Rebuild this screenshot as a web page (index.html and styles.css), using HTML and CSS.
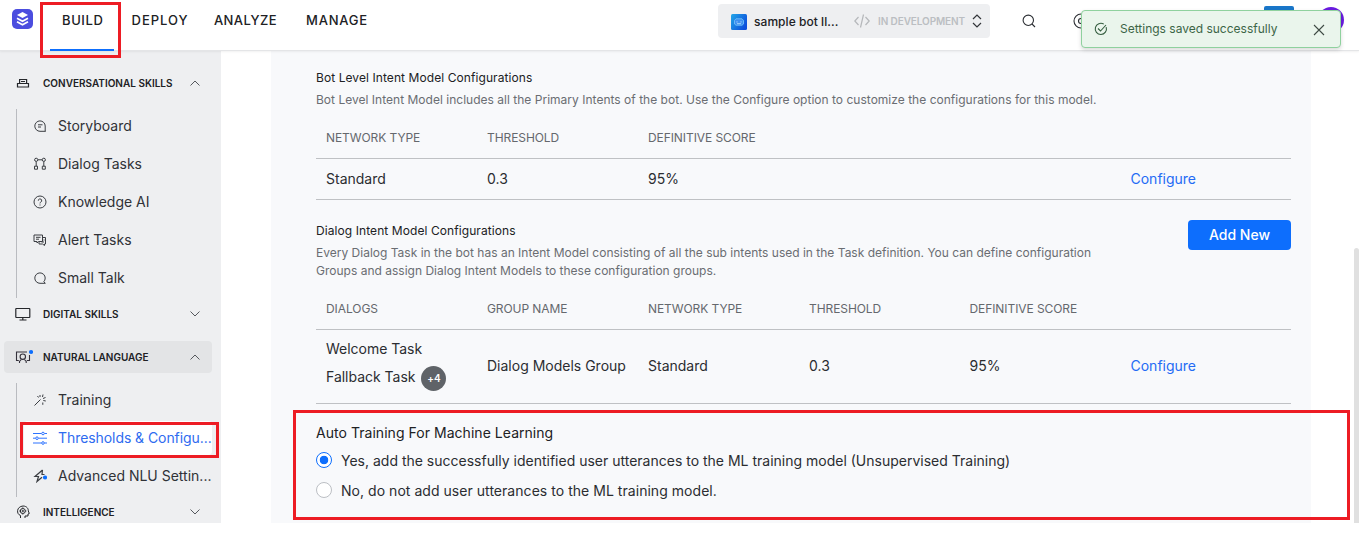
FILE: index.html
```html
<!DOCTYPE html>
<html lang="en">
<head>
<meta charset="utf-8">
<title>Thresholds &amp; Configurations</title>
<link rel="stylesheet" href="styles.css">
</head>
<body>
<div class="app">
  <header class="topbar">
    <svg class="logo" width="21" height="20" viewBox="0 0 21 20"><rect width="21" height="20" rx="5" fill="#4b4ddf"/><path d="M10.500 3l5.500 3-5.500 3L5 6z" fill="#fff"/><path d="M5 9.200l5.500 3 5.500-3M5 12.800l5.500 3 5.500-3" fill="none" stroke="#fff" stroke-width="1.700"/></svg>
    <nav class="tabs">
      <a class="tab active">BUILD</a><a class="tab deploy">DEPLOY</a><a class="tab analyze">ANALYZE</a><a class="tab manage">MANAGE</a>
    </nav>
    <div class="bot-picker">
      <svg class="bot-icon" width="16" height="16" viewBox="0 0 16 16"><defs><linearGradient id="botfill" x1="0" y1="0" x2="1" y2="0.600"><stop offset="0" stop-color="#24a8e8"/><stop offset="1" stop-color="#0c50dc"/></linearGradient></defs><rect width="16" height="16" rx="1.500" fill="url(#botfill)"/><path d="M5 4.800h6l1.500 1.700v3.500l-1.500 1.200H5L3.500 10v-3.500z" fill="#3d8ff0" stroke="#6fbdf8" stroke-width=".9"/><path d="M6 7.300v1.200M10 7.300v1.200M6 9.700h4" stroke="#b4dcff" stroke-width=".9"/></svg>
      <span class="bot-name">sample bot ll...</span>
      <svg class="code" width="16" height="14" viewBox="0 0 16 14" fill="none" stroke="#b5b7ba" stroke-width="1.200"><path d="M4.500 3L.8 7l3.700 4M11.500 3l3.700 4-3.700 4M9.500 .5L6.500 13.500"/></svg>
      <span class="bot-state">IN DEVELOPMENT</span>
      <svg class="updown" width="10" height="14" viewBox="0 0 10 14" fill="none" stroke="#33363a" stroke-width="1.200"><path d="M1 5l4-4 4 4M1 9l4 4 4-4"/></svg>
    </div>
    <svg class="search" width="14" height="14" viewBox="0 0 14 14" fill="none" stroke="#2b2e33" stroke-width="1.100"><circle cx="6.300" cy="6.300" r="5.200"/><path d="M10 10l3 3"/></svg>
    <svg class="help" width="16" height="16" viewBox="0 0 16 16" fill="none" stroke="#2b2e33" stroke-width="1.100"><circle cx="8" cy="8" r="7"/><circle cx="8" cy="8" r="2.500"/></svg>
    <span class="blue-tile"></span>
    <span class="avatar"></span>
  </header>

  <div class="body">
    <aside class="sidebar">
      <div class="section">
        <svg width="16" height="16" viewBox="0 0 16 16" fill="none" stroke="#25272b" stroke-width="1.200"><path d="M4.600 8V4.500h7V8M6 6.500h4M2.500 8.500h11V12h-11z"/></svg>
        <span>CONVERSATIONAL SKILLS</span>
        <svg class="chev" width="10" height="6" viewBox="0 0 10 6"><path d="M.5 5.500L5 1l4.500 4.500"/></svg>
      </div>
      <div class="group first">
        <a class="item"><svg width="14" height="14" viewBox="0 0 14 14"><path d="M12.500 12.300H7A5.200 5.200 0 1 1 12.200 7v5.300zM5 5.800h4.500M5 8h3"/></svg>Storyboard</a>
        <a class="item"><svg width="14" height="14" viewBox="0 0 14 14"><circle cx="3.200" cy="2.800" r="1.600"/><circle cx="10.800" cy="2.800" r="1.600"/><path d="M1.500 9.200h3v3h-3zM9.300 9.200h3v3h-3zM3.200 4.500v4.700M10.800 4.500v4.700M5 2.800h4"/></svg>Dialog Tasks</a>
        <a class="item"><svg width="14" height="14" viewBox="0 0 14 14"><circle cx="7" cy="7" r="6"/><path d="M5.300 5.700a1.700 1.700 0 1 1 2.500 1.400c-.6.400-.8.600-.8 1.300M7 9.500v1"/></svg>Knowledge AI</a>
        <a class="item"><svg width="14" height="14" viewBox="0 0 14 14"><path d="M1 2h8.500v6.500H5.500L4 10V8.500H1zM3 4.300h4.500M3 6.200h3M9.500 4.500h3V11h-1v1.500L9.500 11H6V9M10.500 7h1M8.500 9h2.500"/></svg>Alert Tasks</a>
        <a class="item"><svg width="14" height="14" viewBox="0 0 14 14"><path d="M7 12.300A5.200 5.200 0 1 1 12.200 7c0 1.600-.5 2.800-1.400 3.700l1.500 1.600z"/></svg>Small Talk</a>
      </div>
      <div class="section">
        <svg width="16" height="16" viewBox="0 0 16 16" fill="none" stroke="#25272b" stroke-width="1.200"><rect x=".8" y="2.500" width="14" height="9" rx=".5"/><path d="M7.800 11.500v2M4.500 14h7"/></svg>
        <span>DIGITAL SKILLS</span>
        <svg class="chev" width="10" height="6" viewBox="0 0 10 6"><path d="M.5.500L5 5 9.500.500"/></svg>
      </div>
      <div class="section open">
        <svg width="18" height="16" viewBox="0 0 18 16" fill="none" stroke="#34313b" stroke-width="1.100"><path d="M12 3H1.500v8.500h2.300M11.800 11.500h2.700V6"/><circle cx="7.800" cy="7.700" r="2.700"/><path d="M4.500 14v-1.500l1.800-2M11.200 14v-1.500l-1.800-2"/><circle cx="16" cy="3" r="2.100" fill="#0d6efd" stroke="none"/></svg>
        <span>NATURAL LANGUAGE</span>
        <svg class="chev" width="10" height="6" viewBox="0 0 10 6"><path d="M.5 5.500L5 1l4.500 4.500"/></svg>
      </div>
      <div class="group second">
        <a class="item"><svg width="14" height="14" viewBox="0 0 14 14"><path d="M1.500 12.500l6-6M7 2v2M10 1.500L9.500 4M12.500 4.500L10 5.500M12.800 8l-2.500-.5M9.800 9.500v2.300M4.500 3l1 1.500"/></svg>Training</a>
        <a class="item selected"><svg width="14" height="14" viewBox="0 0 14 14"><path d="M0 2.500h8.500M11.500 2.500H14M0 7.200h2.500M5.500 7.200H14M0 12h8.500M11.500 12H14"/><circle cx="10" cy="2.500" r="1.300"/><circle cx="4" cy="7.200" r="1.300"/><circle cx="10" cy="12" r="1.300"/></svg>Thresholds &amp; Configu...</a>
        <a class="item"><svg width="14" height="14" viewBox="0 0 14 14"><path d="M9.500 1L2 7.500h3.500L4 12.500l5-4.300M9.500 1l-.5 4.500h2.500" stroke-width="1.200"/><circle cx="12" cy="8.500" r="2.100" fill="#0d6efd" stroke="none"/></svg>Advanced NLU Settin...</a>
      </div>
      <div class="section last">
        <svg width="16" height="16" viewBox="0 0 16 16" fill="none" stroke="#25272b" stroke-width="1"><path d="M5.500 14v-2.500C1 10 1.500 2.500 8 2c4 0 5.500 3 5.300 5l1 2.500-1.300.5v2h-3v2"/><circle cx="7.800" cy="7" r="2.500"/><circle cx="7.800" cy="7" r=".7"/><path d="M7.800 3.500v1M7.800 9.500v1M4.300 7h1M10.300 7h1"/></svg>
        <span>INTELLIGENCE</span>
        <svg class="chev" width="10" height="6" viewBox="0 0 10 6"><path d="M.5.500L5 5 9.500.500"/></svg>
      </div>
    </aside>

    <main class="panel">
      <h3 class="title">Bot Level Intent Model Configurations</h3>
      <p class="desc one">Bot Level Intent Model includes all the Primary Intents of the bot. Use the Configure option to customize the configurations for this model.</p>
      <div class="row head"><span>NETWORK TYPE</span><span>THRESHOLD</span><span>DEFINITIVE SCORE</span></div>
      <div class="row data"><span>Standard</span><span>0.3</span><span>95%</span><span></span><span></span><a>Configure</a></div>

      <div class="dialog-head">
        <div>
          <h3 class="title">Dialog Intent Model Configurations</h3>
          <p class="desc two">Every Dialog Task in the bot has an Intent Model consisting of all the sub intents used in the Task definition. You can define configuration<br>Groups and assign Dialog Intent Models to these configuration groups.</p>
        </div>
        <button class="add">Add New</button>
      </div>
      <div class="row head tall"><span>DIALOGS</span><span>GROUP NAME</span><span>NETWORK TYPE</span><span>THRESHOLD</span><span>DEFINITIVE SCORE</span></div>
      <div class="row data dialogs"><div class="tasks"><div>Welcome Task</div><div class="fallback">Fallback Task<b class="more">+4</b></div></div><span>Dialog Models Group</span><span>Standard</span><span>0.3</span><span>95%</span><a>Configure</a></div>

      <h3 class="auto-title">Auto Training For Machine Learning</h3>
      <label class="choice"><i class="radio on"></i><span class="yes">Yes, add the successfully identified user utterances to the ML training model (Unsupervised Training)</span></label>
      <label class="choice"><i class="radio"></i><span class="no">No, do not add user utterances to the ML training model.</span></label>
    </main>
  </div>
  <div class="scroll-thumb"></div>
</div>

<div class="toast">
  <svg width="14" height="14" viewBox="0 0 14 14" fill="none" stroke="#355e40" stroke-width="1.100"><path d="M12.200 5.200A5.600 5.600 0 1 1 9.800 2.100M4 6.500l2.500 2.500 5.500-6"/></svg>
  <span>Settings saved successfully</span>
  <svg class="close" width="12" height="12" viewBox="0 0 12 12" fill="none" stroke="#3e4a44" stroke-width="1.100"><path d="M1 1l10 10M11 1L1 11"/></svg>
</div>
<div class="mark mark-build"></div>
<div class="mark mark-threshold"></div>
<div class="mark mark-auto"></div>
</body>
</html>
```
FILE: styles.css
```css
* { box-sizing: border-box; }
body { margin: 0; background: #fff; font-family: Inter, "Liberation Sans", sans-serif; color: #202124; height: 534px; overflow: hidden; position: relative; }
h3, p { margin: 0; font-weight: 400; }
svg { flex: none; }
.app { height: 523px; overflow: hidden; position: relative; }

.topbar { height: 51px; display: flex; align-items: flex-start; border-bottom: 1px solid #e4e5e7; box-shadow: 0 1px 2px rgba(0,0,0,.06); position: relative; background: #fff; }
.logo { margin: 9px 0 0 12px; }
.tabs { display: flex; width: 685px; margin-left: 17px; height: 51px; }
.tab { font-size: 13px; font-weight: 500; letter-spacing: 1px; line-height: 40px; height: 51px; white-space: nowrap; }
.tab.active { width: 64px; padding-left: 12px; border-bottom: 2px solid #0d6efd; letter-spacing: .600px; }
.deploy { margin-left: 17.500px; width: 82.500px; }
.analyze { width: 92px; letter-spacing: .400px; }
.manage { letter-spacing: .800px; }
.bot-picker { width: 272px; height: 34px; margin: 4px 0 0 -17px; padding-left: 13px; border-radius: 4px; background: #eeeff1; display: flex; align-items: center; }
.bot-icon { margin-top: 2px; }
.bot-name { width: 92px; margin-left: 7px; font-size: 12px; font-weight: 500; letter-spacing: .050px; white-space: nowrap; }
.code { margin-left: 8px; }
.bot-state { margin-left: 8px; width: 89px; font-size: 10px; font-weight: 600; letter-spacing: -.100px; color: #bbbec2; white-space: nowrap; }
.updown { margin-left: 5px; }
.search { margin: 14px 0 0 32px; }
.help { margin: 13px 0 0 37px; }
.blue-tile { width: 30px; height: 30px; margin: 6px 0 0 175px; background: #1976c9; border-radius: 2px; }
.avatar { width: 26px; height: 26px; margin: 7px 0 0 24px; border-radius: 50%; background: #6a1be0; }

.body { display: flex; height: 472px; }
.sidebar { width: 221px; background: #eeeff1; padding: 16px 9px 0 4px; }
.section { height: 32px; display: flex; align-items: center; border-radius: 4px; padding-left: 11px; font-size: 10px; font-weight: 600; }
.section span { white-space: nowrap; width: 147px; margin-left: 12px; padding-bottom: 1px; line-height: 14px; }
.section.open { margin-top: 11px; background: #e3e4e6; }
.section.open span { margin-left: 10px; }
.section.last { margin-top: -1px; }
.section.last span { padding-bottom: 0; }
.chev { fill: none; stroke: #55585d; stroke-width: 1; }
.group { margin: 10px 0 0 12px; border-left: 1px solid #b9bbc0; }
.first { height: 189px; }
.second { height: 114px; }
.item { display: flex; align-items: center; height: 38px; padding-left: 16px; gap: 11px; font-size: 14px; line-height: 16px; color: #303237; white-space: nowrap; transform: translateY(-2px); }
.item svg { fill: none; stroke: #3a3d42; stroke-width: 1; }
.item.selected { margin: 2px 0 2px 7px; padding-left: 9px; height: 34px; border-radius: 4px; background: #fff; color: #2e6bf0; letter-spacing: -.070px; }
.item.selected svg { stroke: #2d73ff; }

.panel { margin-left: 50px; width: 1040px; padding: 18px 20px 0 45px; background: #f8f9fb; }
.title { font-size: 12px; line-height: 18px; letter-spacing: .080px; }
.desc { margin-top: 4px; font-size: 12px; line-height: 18px; color: #6a6d72; white-space: nowrap; }
.one { letter-spacing: .017px; }
.two { letter-spacing: .005px; }
.row { display: grid; grid-template-columns: 161px 161px 161px 160.500px 161px 1fr; align-items: center; border-bottom: 1px solid #bfc1c4; padding-left: 10px; }
.head { height: 50px; padding-top: 7px; font-size: 12px; letter-spacing: -.080px; color: #65686d; }
.head.tall { padding-top: 8px; }
.data { height: 41px; padding-bottom: 2px; font-size: 14px; color: #2b2d31; white-space: nowrap; }
.data a { color: #246bf5; }
.dialog-head { display: flex; justify-content: space-between; align-items: flex-start; padding-top: 20px; height: 80px; }
.dialog-head .title { margin-top: 2px; }
.add { border: 0; width: 103px; height: 30px; padding: 0 0 2px; border-radius: 4px; background: #0d6efd; color: #fff; font: 500 14px Inter, sans-serif; }
.dialogs { height: 74px; }
.tasks { line-height: 28px; margin-top: -5px; letter-spacing: -.020px; }
.fallback { display: flex; height: 28px; }
.more { width: 25px; height: 25px; margin: 3px 0 0 6px; border-radius: 50%; background: #5f6368; color: #fff; font-size: 10px; font-weight: 600; line-height: 25px; text-align: center; }
.auto-title { margin: 19px 0 3px; font-size: 14px; line-height: 20px; letter-spacing: .040px; }
.choice { display: flex; align-items: center; height: 30px; font-size: 14px; color: #2b2d31; white-space: nowrap; }
.choice span { padding-bottom: 2px; }
.no { letter-spacing: .040px; }
.radio { width: 16px; height: 16px; margin: -2px 9px 0 0; border: 1px solid #bcbfc4; border-radius: 50%; background: #fff; }
.radio.on { border-color: #0d6efd; background: radial-gradient(circle, #0d6efd 0 4px, #fff 4.600px); }
.scroll-thumb { position: absolute; left: 1354px; top: 248px; width: 5px; height: 280px; border-radius: 3px; background: #e0e0e0; }

.toast { position: absolute; left: 1081px; top: 10px; width: 260px; height: 38px; display: flex; align-items: center; padding-left: 12px; border: 1px solid #8fd19e; border-radius: 4px; background: #eaf5ec; box-shadow: 0 2px 4px rgba(0,0,0,.15); color: #3c6547; font-size: 12px; }
.toast > svg:first-child { margin-top: -1px; }
.toast span { width: 181px; margin-left: 12px; padding-bottom: 1px; white-space: nowrap; }
.close { margin-left: 12px; margin-top: 2px; }
.mark { position: absolute; border: 3px solid #ed1c24; }
.mark-build { left: 40px; top: 2px; width: 81px; height: 56px; }
.mark-threshold { left: 20px; top: 422px; width: 199px; height: 36px; }
.mark-auto { left: 293px; top: 410px; width: 1057px; height: 110px; }
```
